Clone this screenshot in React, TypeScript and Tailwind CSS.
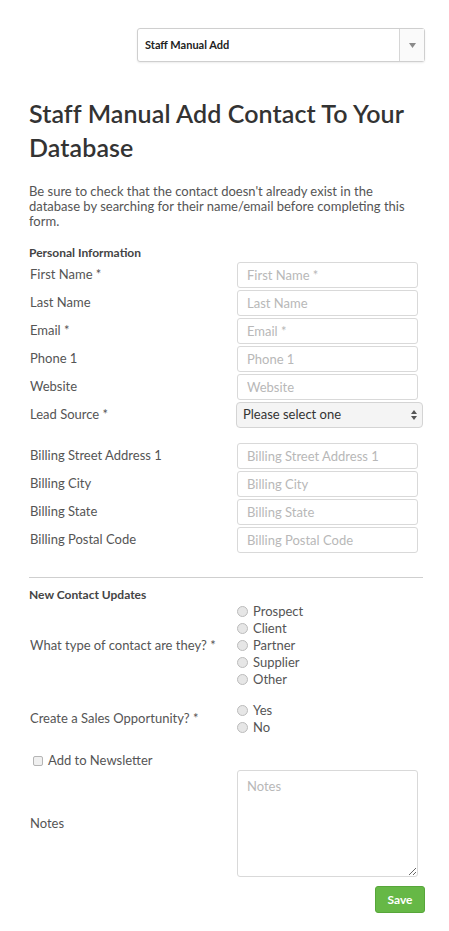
import React from "react";

const font = { fontFamily: "Lato, 'Open Sans', sans-serif" };

const personal = [
  { label: "First Name *", placeholder: "First Name *" },
  { label: "Last Name", placeholder: "Last Name" },
  { label: "Email *", placeholder: "Email *" },
  { label: "Phone 1", placeholder: "Phone 1" },
  { label: "Website", placeholder: "Website" },
];

const billing = [
  "Billing Street Address 1",
  "Billing City",
  "Billing State",
  "Billing Postal Code",
];

function TextRow({ label, placeholder }: { label: string; placeholder: string }) {
  return (
    <div className="flex items-center h-[26px]">
      <span className="w-[208px] pl-[1px] text-[13px] text-[#555]">{label}</span>
      <input
        placeholder={placeholder}
        className="w-[181px] h-[26px] rounded-[3px] border border-[#d9d9d9] bg-white px-[9px] text-[13px] text-[#555] placeholder:text-[#b8b8b8] outline-none"
      />
    </div>
  );
}

function Radio({ label }: { label: string }) {
  return (
    <div className="flex items-center h-[17px] gap-[5px]">
      <span className="w-[11px] h-[11px] rounded-full border border-[#bcbcbc] bg-[#e6e6e6]" />
      <span className="text-[13px] text-[#555]">{label}</span>
    </div>
  );
}

export default function App() {
  return (
    <div className="w-[449px] min-h-[931px] bg-white" style={font}>
      {/* top form picker */}
      <div className="pt-[28px] flex justify-end pr-[24px]">
        <div className="w-[288px] h-[34px] flex rounded-[3px] border border-[#cfcfcf] bg-white shadow-[0_1px_2px_rgba(0,0,0,0.08)]">
          <div className="flex-1 flex items-center pl-[7px] text-[11px] font-bold text-[#222]">Staff Manual Add</div>
          <div className="w-[25px] border-l border-[#d6d6d6] flex items-center justify-center bg-[#fafafa]">
            <svg width="7" height="5" viewBox="0 0 7 5">
              <path d="M0 0h7L3.5 5z" fill="#8a8a8a" />
            </svg>
          </div>
        </div>
      </div>

      <div className="pl-[29px] pr-[26px]">
        <h1 className="mt-[34px] text-[25px] leading-[34px] font-semibold text-[#333] tracking-[0.1px]">
          Staff Manual Add Contact To Your Database
        </h1>

        <p className="mt-[20px] text-[13px] leading-[15px] text-[#555]">
          Be sure to check that the contact doesn't already exist in the database by searching for their name/email before completing this form.
        </p>

        <div className="mt-[16px] text-[12px] leading-[16px] font-bold text-[#444]">Personal Information</div>

        <div className="mt-[1px] flex flex-col gap-[2px]">
          {personal.map((f) => (
            <TextRow key={f.label} label={f.label} placeholder={f.placeholder} />
          ))}
          <div className="flex items-center h-[26px]">
            <span className="w-[207px] pl-[1px] text-[13px] text-[#555]">Lead Source *</span>
            <div className="w-[187px] h-[26px] rounded-[4px] border border-[#d4d4d4] bg-[#f4f4f4] flex items-center justify-between pl-[6px] pr-[5px] text-[13px] text-[#333]">
              <span>Please select one</span>
              <svg width="6" height="10" viewBox="0 0 6 10">
                <path d="M0 4L3 0l3 4z M0 6l3 4 3-4z" fill="#555" />
              </svg>
            </div>
          </div>
        </div>

        <div className="mt-[15px] flex flex-col gap-[2px]">
          {billing.map((b) => (
            <TextRow key={b} label={b} placeholder={b} />
          ))}
        </div>

        <div className="mt-[24px] border-t border-[#cfcfcf]" />

        <div className="mt-[9px] text-[12px] leading-[16px] font-bold text-[#444]">New Contact Updates</div>

        <div className="flex items-center">
          <span className="w-[208px] pl-[1px] text-[13px] text-[#555]">What type of contact are they? *</span>
          <div className="flex flex-col">
            {["Prospect", "Client", "Partner", "Supplier", "Other"].map((r) => (
              <Radio key={r} label={r} />
            ))}
          </div>
        </div>

        <div className="mt-[14px] flex items-center">
          <span className="w-[208px] pl-[1px] text-[13px] text-[#555]">Create a Sales Opportunity? *</span>
          <div className="flex flex-col">
            <Radio label="Yes" />
            <Radio label="No" />
          </div>
        </div>

        <div className="mt-[16px] flex items-center h-[17px] gap-[5px] pl-[4px]">
          <span className="w-[10px] h-[10px] rounded-[2px] border border-[#b5b5b5] bg-[#f0f0f0]" />
          <span className="text-[13px] text-[#555]">Add to Newsletter</span>
        </div>

        <div className="mt-[1px] flex items-center">
          <span className="w-[208px] pl-[1px] text-[13px] text-[#555]">Notes</span>
          <textarea
            placeholder="Notes"
            className="w-[181px] h-[107px] rounded-[3px] border border-[#d9d9d9] bg-white px-[9px] py-[6px] text-[13px] text-[#555] placeholder:text-[#b8b8b8] outline-none"
          />
        </div>

        <div className="mt-[9px] -mr-[2px] flex justify-end">
          <button className="w-[50px] h-[27px] rounded-[3px] bg-[#66b846] border border-[#57a63a] text-white text-[12px] font-bold">
            Save
          </button>
        </div>
      </div>
    </div>
  );
}
